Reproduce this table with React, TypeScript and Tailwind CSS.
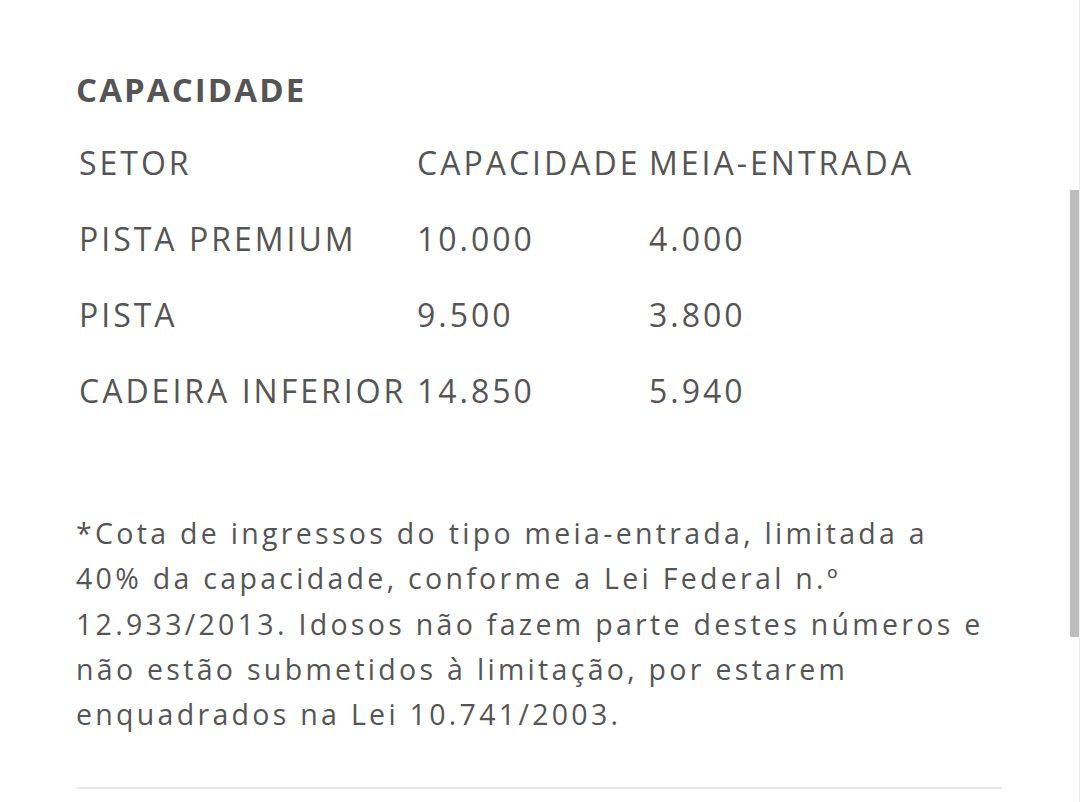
import React from "react";

const rows = [
  { setor: "PISTA PREMIUM", capacidade: "10.000", meia: "4.000" },
  { setor: "PISTA", capacidade: "9.500", meia: "3.800" },
  { setor: "CADEIRA INFERIOR", capacidade: "14.850", meia: "5.940" },
];

const font = { fontFamily: '"Open Sans", "Noto Sans", sans-serif' };

export default function App() {
  return (
    <div className="relative h-[802px] w-[1080px] overflow-hidden bg-white text-[#555555]" style={font}>
      <div className="pl-[76px] pr-[77px] pt-[70px]">
        <h2 className="text-[33px] font-bold leading-[40px] tracking-[2.1px]">CAPACIDADE</h2>

        <div className="ml-[3px] mt-[15px] grid grid-cols-[338px_232px_auto] text-[32px] tracking-[3px]">
          <div className="flex h-[76px] items-center">SETOR</div>
          <div className="flex h-[76px] items-center">CAPACIDADE</div>
          <div className="flex h-[76px] items-center">MEIA-ENTRADA</div>
          {rows.map((r) => (
            <React.Fragment key={r.setor}>
              <div className="flex h-[76px] items-center whitespace-nowrap">{r.setor}</div>
              <div className="flex h-[76px] items-center">{r.capacidade}</div>
              <div className="flex h-[76px] items-center">{r.meia}</div>
            </React.Fragment>
          ))}
        </div>

        <p className="mt-[82px] whitespace-pre-line text-[28.5px] leading-[45.3px] tracking-[3.3px]">
          {"*Cota de ingressos do tipo meia-entrada, limitada a\n40% da capacidade, conforme a Lei Federal n.º\n12.933/2013. Idosos não fazem parte destes números e\nnão estão submetidos à limitação, por estarem\nenquadrados na Lei 10.741/2003."}
        </p>

        <div className="mt-[50px] h-[2px] w-[926px] bg-[#e8e8e8]" />
      </div>

      {/* scrollbar overlay */}
      <div className="absolute right-0 top-0 h-full w-px bg-[#ededed]" />
      <div className="absolute right-[1px] top-[190px] h-[447px] w-[9px] bg-[#bdbdbd]" />
    </div>
  );
}
